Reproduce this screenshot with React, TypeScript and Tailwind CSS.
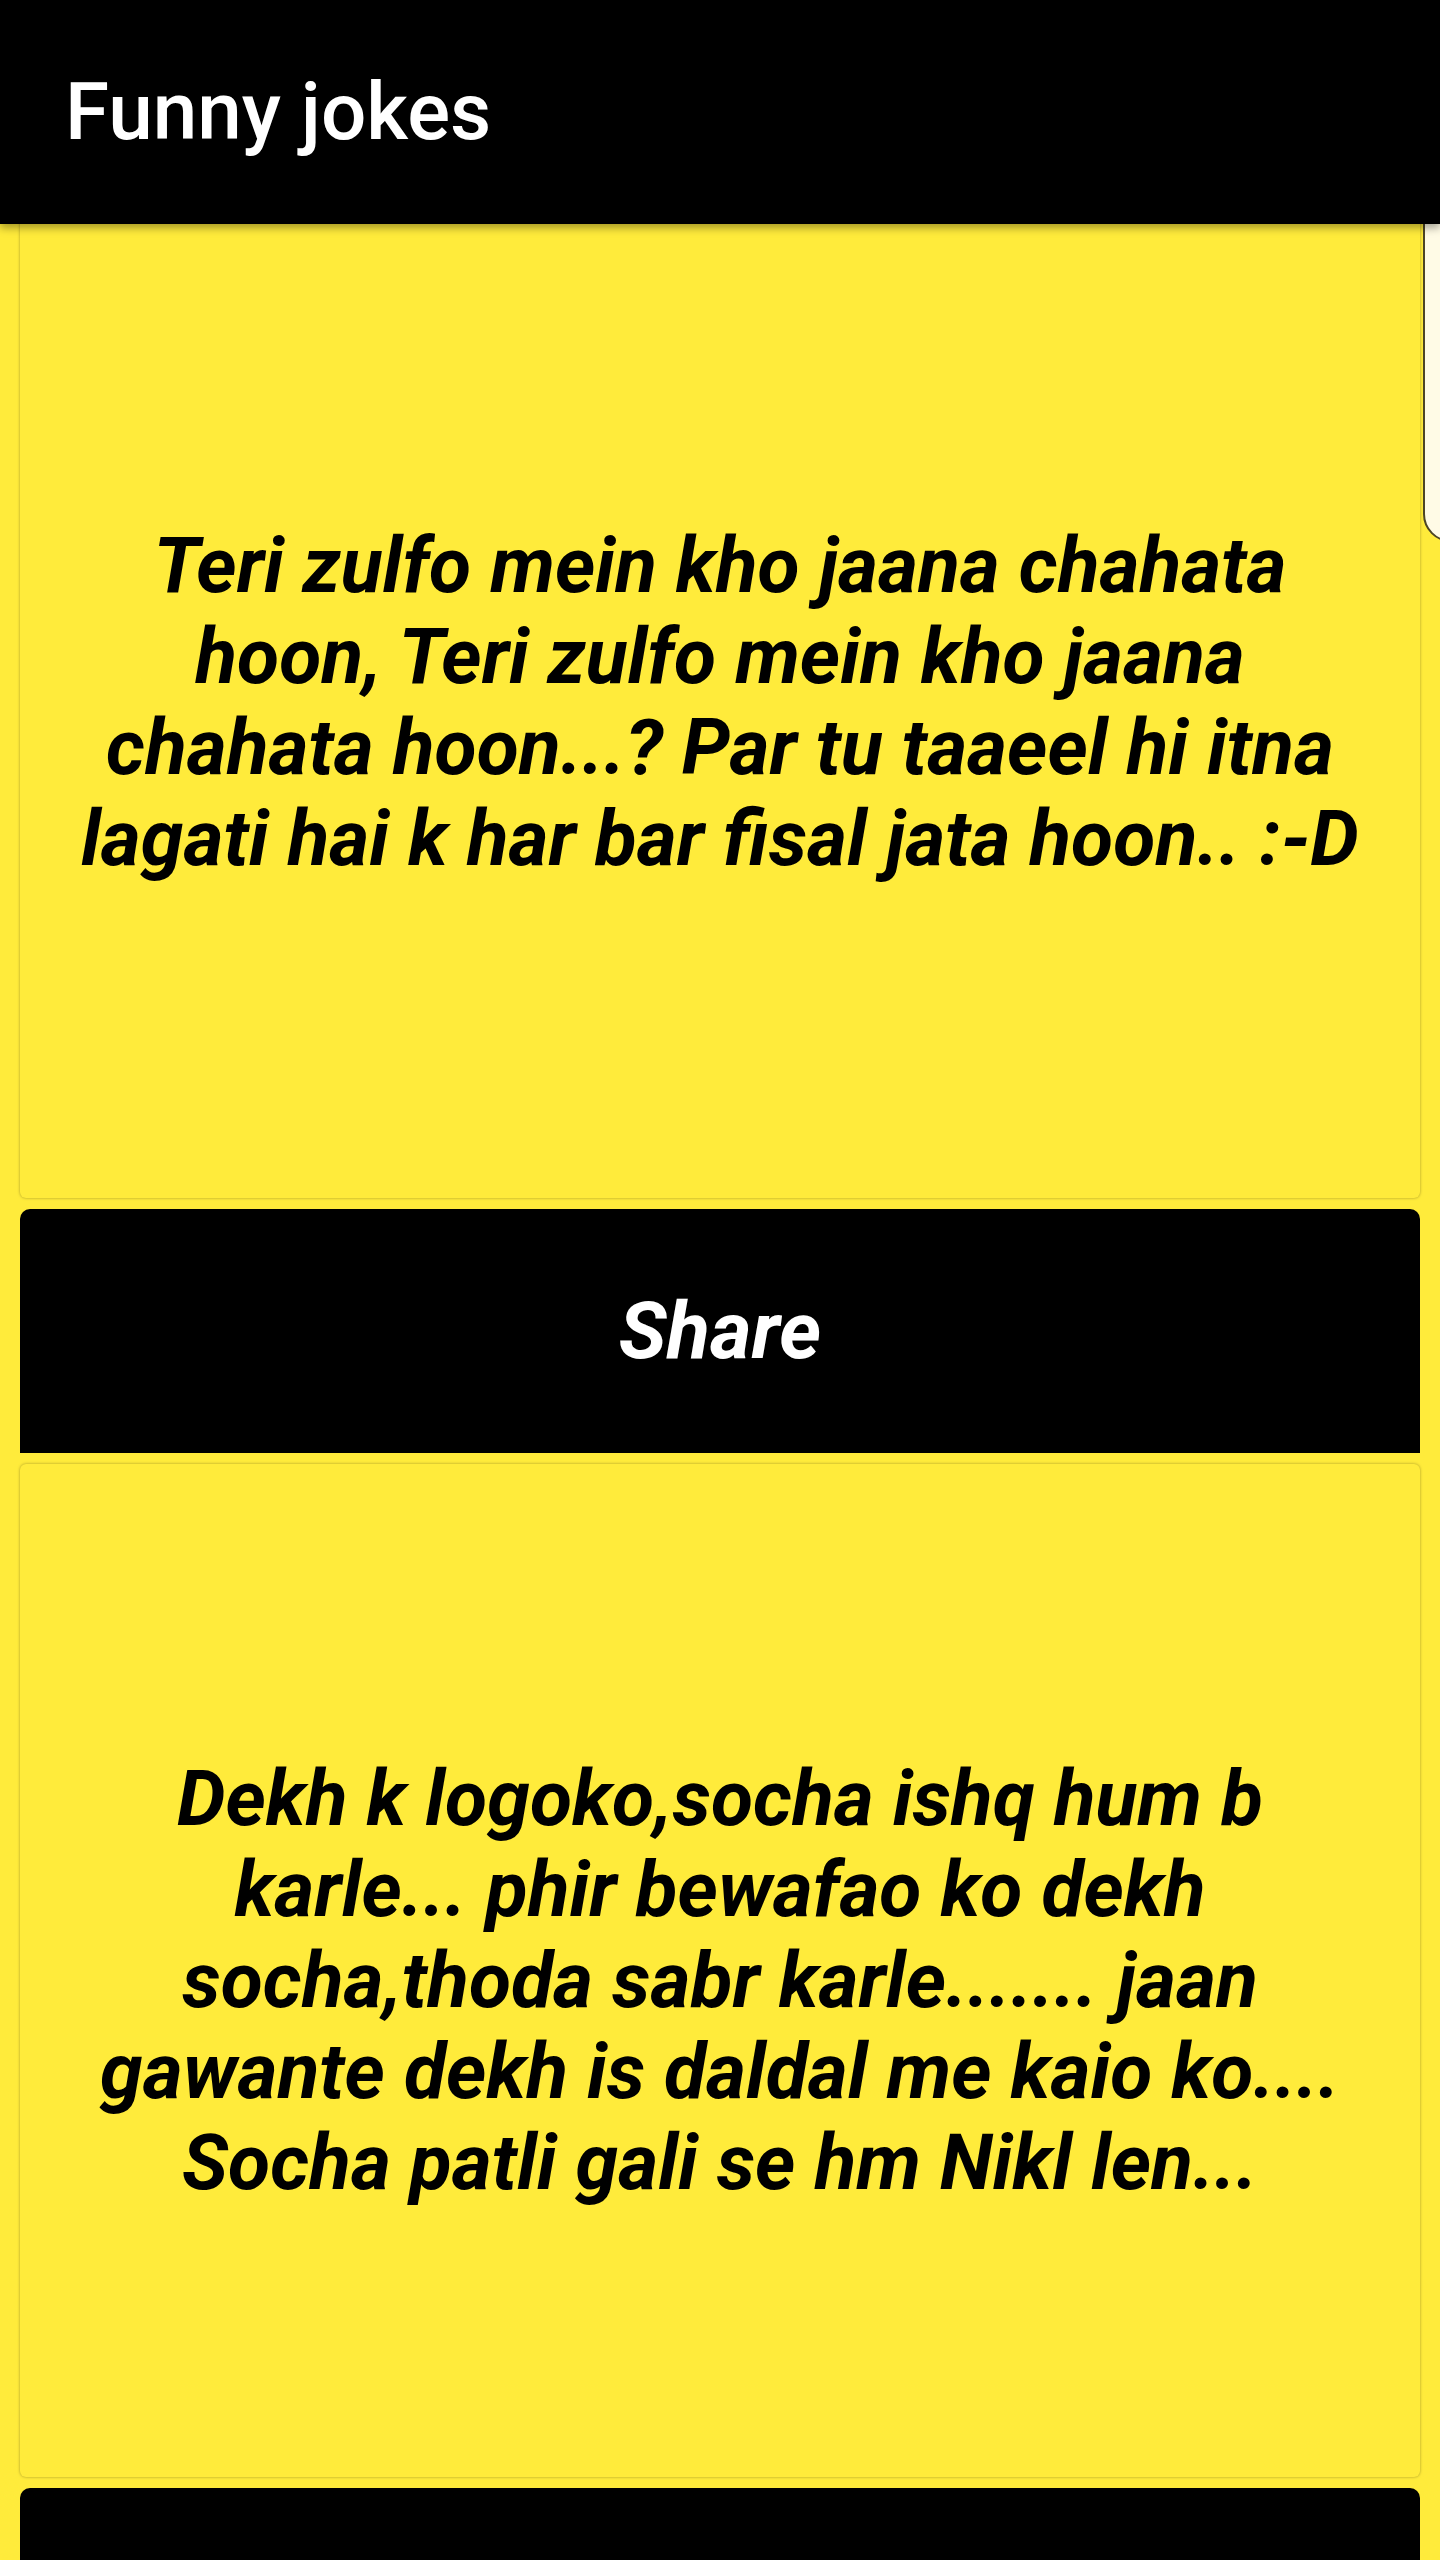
import React from 'react';

const jokes = [
  'Teri zulfo mein kho jaana chahata hoon, Teri zulfo mein kho jaana chahata hoon...? Par tu taaeel hi itna lagati hai k har bar fisal jata hoon.. :-D',
  'Dekh k logoko,socha ishq hum b karle... phir bewafao ko dekh socha,thoda sabr karle....... jaan gawante dekh is daldal me kaio ko.... Socha patli gali se hm Nikl len...',
];

const JokeItem: React.FC<{ text: string }> = ({ text }) => (
  <div className="flex flex-col gap-[11px] mx-[20px] mb-[11px]">
    <div className="h-[1013px] bg-[#ffeb3b] rounded-[6px] shadow-[0_0_3px_rgba(0,0,0,0.35)] flex items-center justify-center px-[50px] pt-[22px]">
      <p className="text-center text-black font-bold italic text-[77px] leading-[91px]">{text}</p>
    </div>
    <button className="h-[244px] bg-black rounded-t-[10px] flex items-center justify-center">
      <span className="text-white font-bold italic text-[80px]">Share</span>
    </button>
  </div>
);

export default function App() {
  return (
    <div className="relative w-[1440px] h-[2560px] overflow-hidden bg-[#ffeb3b]" style={{ fontFamily: 'Roboto, "Noto Sans", sans-serif' }}>
      <div className="pt-[185px]">
        {jokes.map((j, i) => (
          <JokeItem key={i} text={j} />
        ))}
      </div>

      {/* fast scroll popup peeking from the right edge */}
      <div className="absolute left-[1423px] top-[150px] w-[60px] h-[392px] bg-[#fffbe6] border-[2px] border-[#4d4526] rounded-[28px]" />

      <header className="absolute top-0 left-0 right-0 h-[224px] bg-black flex items-center pl-[65px] shadow-[0_4px_8px_rgba(0,0,0,0.35)] z-10">
        <h1 className="text-white text-[80px] font-medium">Funny jokes</h1>
      </header>
    </div>
  );
}
